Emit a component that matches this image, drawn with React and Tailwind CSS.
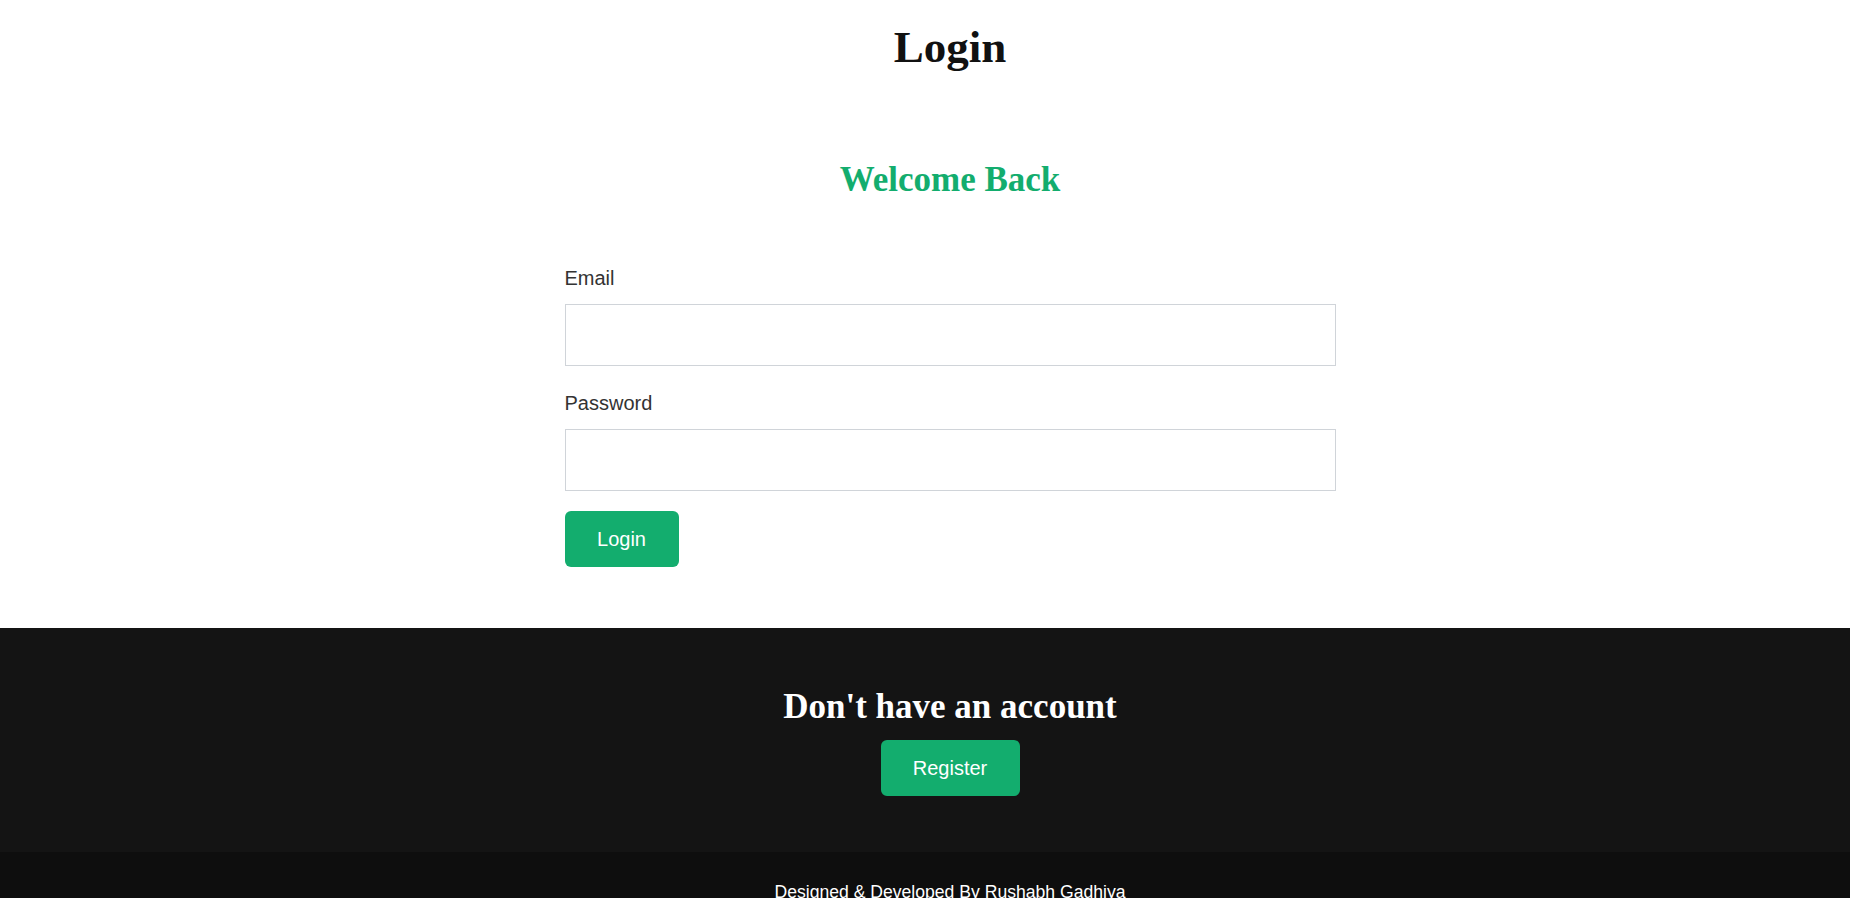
export default function App() {
  const sans = { fontFamily: '"Liberation Sans", Arial, sans-serif' };
  return (
    <div className="w-full overflow-x-hidden bg-white">
      <div className="w-[1900px] font-['Liberation_Serif',serif]">
        <header className="pt-[21px] text-center">
          <h1 className="text-[45px] leading-[52px] font-bold text-[#111]">Login</h1>
        </header>
        <main className="flex flex-col items-center pt-[87px] pb-[61px]">
          <h2 className="text-[35px] leading-[40px] font-bold text-[#13ad6e]">Welcome Back</h2>
          <form className="mt-[66px] flex w-[771px] flex-col" style={sans}>
            <label className="text-[20px] leading-[24px] text-[#333]">Email</label>
            <input type="email" className="mt-[14px] h-[62px] w-full border border-[#d0d4d9] bg-white px-3 outline-none" />
            <label className="mt-[25px] text-[20px] leading-[24px] text-[#333]">Password</label>
            <input type="password" className="mt-[14px] h-[62px] w-full border border-[#d0d4d9] bg-white px-3 outline-none" />
            <div className="mt-[20px]">
              <button type="button" className="h-[56px] w-[114px] rounded-[6px] bg-[#13ad6e] text-[20px] text-white">Login</button>
            </div>
          </form>
        </main>
        <section className="flex flex-col items-center bg-[#141414] pt-[59px] pb-[56px]">
          <h2 className="text-[35px] leading-[40px] font-bold text-white">Don't have an account</h2>
          <button type="button" className="mt-[13px] h-[56px] w-[139px] rounded-[6px] bg-[#13ad6e] text-[20px] text-white" style={sans}>Register</button>
        </section>
        <footer className="bg-[#0e0e0e] pt-[29px] pb-[29px] text-center" style={sans}>
          <p className="text-[17.6px] leading-[22px] text-white">Designed &amp; Developed By Rushabh Gadhiya</p>
        </footer>
      </div>
    </div>
  );
}
